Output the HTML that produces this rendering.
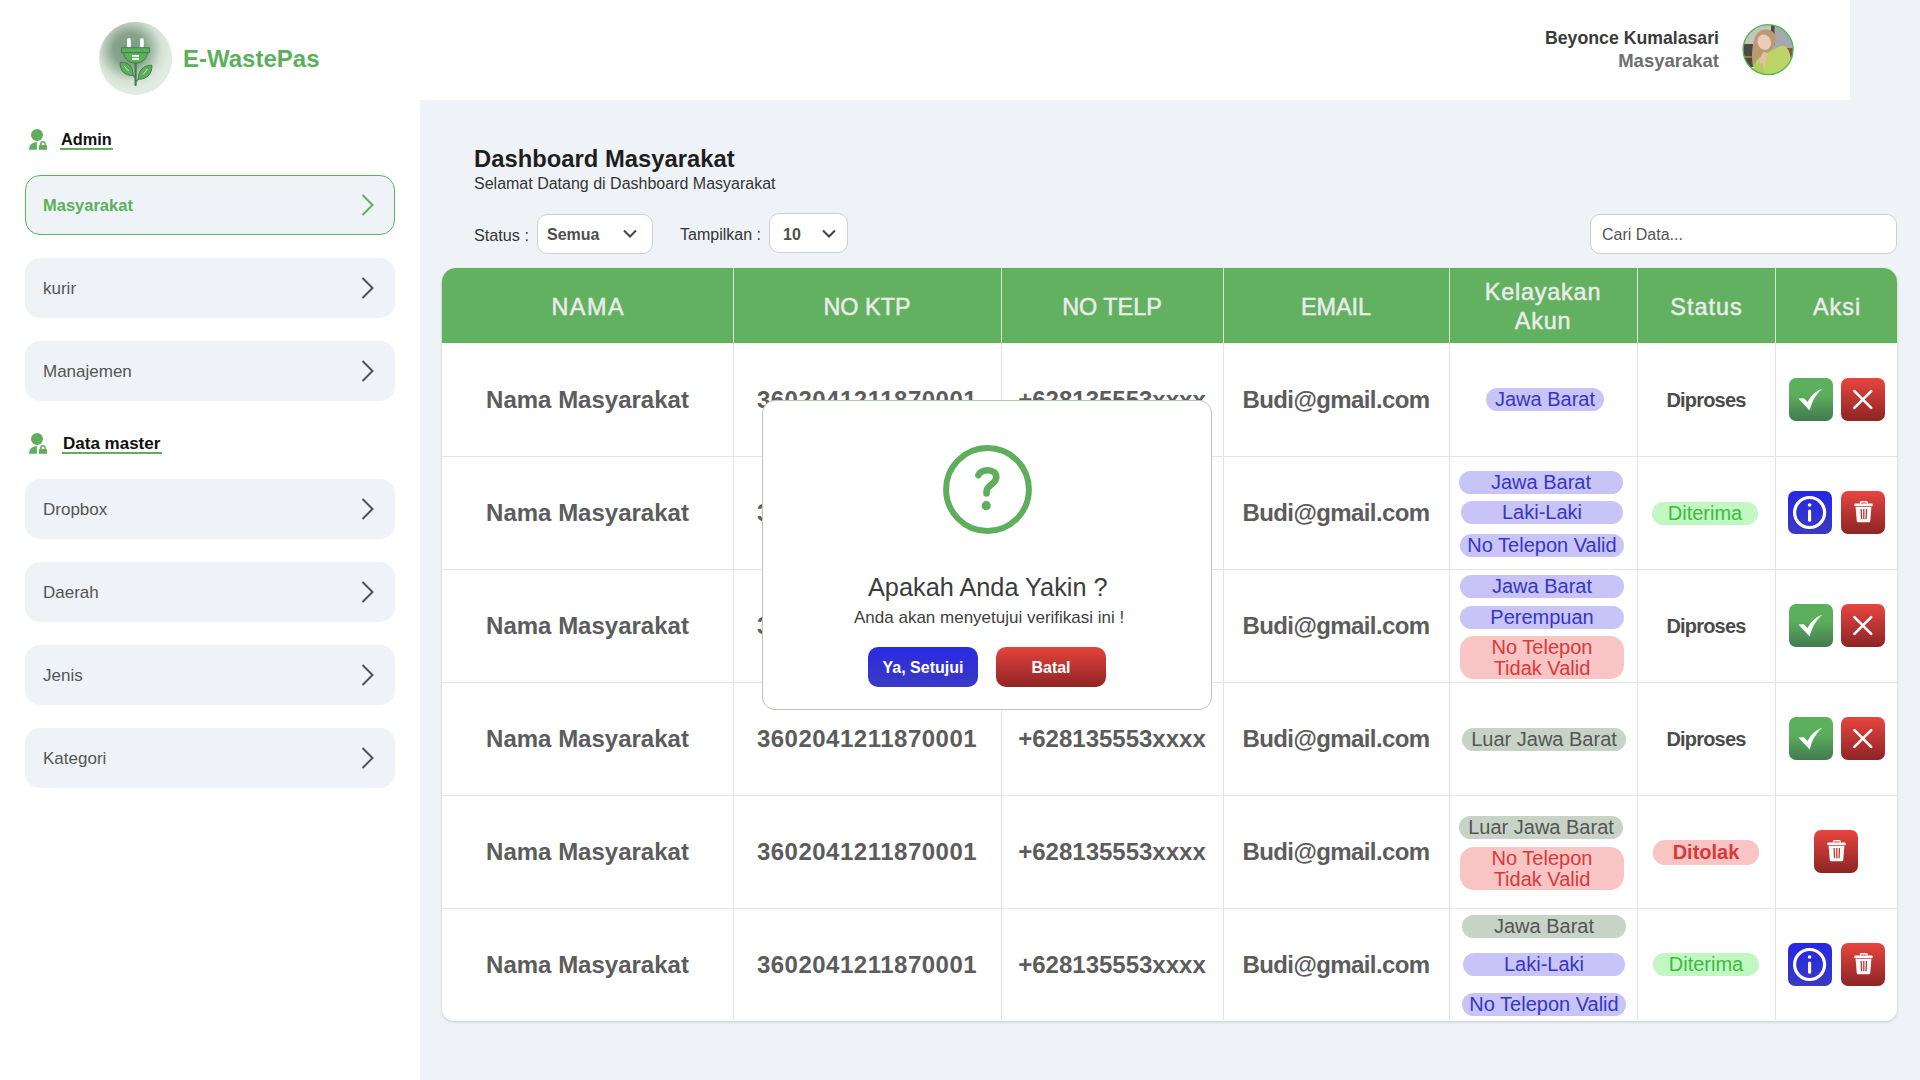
<!DOCTYPE html>
<html><head><meta charset="utf-8">
<style>
*{box-sizing:border-box;margin:0;padding:0}
html,body{width:1920px;height:1080px;overflow:hidden;background:#eff3f8;font-family:"Liberation Sans",sans-serif}
.abs{position:absolute}
.t{position:absolute;white-space:nowrap;line-height:1}
#sidebar{position:absolute;left:0;top:0;width:420px;height:1080px;background:#fff}
#topbar{position:absolute;left:0;top:0;width:1850px;height:100px;background:#fff}
.nav{position:absolute;left:25px;width:370px;height:60px;background:#eff3f8;border-radius:15px}
.nav .lbl{position:absolute;left:18px;top:22px;font-size:17px;line-height:1;color:#555}
.nav svg{position:absolute;left:335px;top:18px}
.sel{position:absolute;background:#fff;border:1px solid #cfcfcf;border-radius:10px}
.cell{position:absolute;display:flex;align-items:center;justify-content:center;text-align:center;white-space:nowrap}
.hd{font-size:23.4px;line-height:29px;color:#ebebeb;-webkit-text-stroke:0.5px #ebebeb;padding-top:3px}
.td{font-size:24px;line-height:1;font-weight:bold;color:#5c5c5c}
.bd{position:absolute;height:23px;border-radius:12px;font-size:20px;line-height:23px;text-align:center;white-space:nowrap}
.lv{background:#c8c4f8;color:#3636c4}
.pk{background:#f8c4c4;color:#d63a3a}
.gr{background:#c6d3c6;color:#555}
.lg{background:#c2f6c2;color:#3cbc3c}
.two{height:43px;line-height:20.5px;padding-top:1px;border-radius:14px}
.dt{font-weight:bold;line-height:25px}
.st{font-size:20px;line-height:1;font-weight:bold;color:#4a4c4a;letter-spacing:-0.8px}
.btn{position:absolute;width:44px;height:43px;border-radius:7px}
.btn svg{position:absolute;left:0;top:0}
.bg{background:linear-gradient(#5cb05c 0%,#5cae5c 40%,#427a50 100%)}
.br{background:linear-gradient(#e8453f,#8c2525)}
.bb{background:linear-gradient(#2626e6,#3a3ac2)}
.mb{position:absolute;height:40px;border-radius:10px;color:#fff;font-weight:bold;font-size:16px;line-height:42px;text-align:center}
.ktp{letter-spacing:0.5px}
.em{letter-spacing:-0.6px}
</style></head><body>
<div id="sidebar"></div>
<div id="topbar"></div>

<!-- logo -->
<svg class="abs" style="left:96px;top:20px" width="80" height="80" viewBox="0 0 80 80">
  <defs>
    <radialGradient id="lg" cx="0.42" cy="0.38" r="0.55">
      <stop offset="0" stop-color="#7d9a82"/>
      <stop offset="0.4" stop-color="#87a48b"/>
      <stop offset="0.78" stop-color="#d3e1d3"/>
      <stop offset="1" stop-color="#e1ece1"/>
    </radialGradient>
  </defs>
  <circle cx="39.6" cy="38.3" r="36.6" fill="url(#lg)"/>
  <rect x="31" y="18" width="3.8" height="10" rx="1.9" fill="#fff"/>
  <rect x="44" y="18" width="3.8" height="10" rx="1.9" fill="#fff"/>
  <rect x="25.4" y="27.8" width="28" height="4.8" fill="#5cb05c" stroke="#3f7f4a" stroke-width="1"/>
  <path d="M27.6 32.6 L51.4 32.6 A11.9 10.7 0 0 1 27.6 32.6 Z" fill="#5cb05c" stroke="#3f7f4a" stroke-width="1"/>
  <rect x="36" y="35" width="7" height="1.8" fill="#fff"/>
  <rect x="36" y="38" width="7" height="1.8" fill="#fff"/>
  <path d="M39.6 43.3 V65" stroke="#3f7f4a" stroke-width="2.2" stroke-linecap="round"/>
  <path d="M24.2 42.4 C33 41.5 37.5 48 37 55.4 C28.5 56 23.5 50 24.2 42.4 Z" fill="#5cb05c" stroke="#3f7f4a" stroke-width="1"/>
  <path d="M37 55.4 L39.6 58" stroke="#3f7f4a" stroke-width="1.2"/>
  <path d="M55.8 45.3 C56.5 53.5 51 59.5 42.3 59.2 C42 51 47.5 45 55.8 45.3 Z" fill="#5cb05c" stroke="#3f7f4a" stroke-width="1"/>
  <path d="M42.3 59.2 L39.6 62" stroke="#3f7f4a" stroke-width="1.2"/>
  <path d="M28.2 46.2 L32.6 51" stroke="#e8f3e8" stroke-width="0.8"/>
  <path d="M51.5 49 L47 54.5" stroke="#e8f3e8" stroke-width="0.8"/>
</svg>
<div class="t" style="left:183px;top:47px;font-size:24px;font-weight:bold;color:#5cb05c">E-WastePas</div>

<!-- admin heading -->
<svg class="abs" style="left:28px;top:128px" width="20" height="22" viewBox="0 0 20 22">
  <circle cx="9" cy="7" r="6" fill="#5eae5c"/>
  <path d="M1 21.8 C1 17 4 14.5 8.8 14 V21.8 Z" fill="#5eae5c"/>
  <rect x="11" y="17.1" width="7.9" height="4.7" fill="#5eae5c"/>
  <path d="M12.85 17.6 V15.8 A2.1 2.1 0 0 1 17.05 15.8 V17.6" stroke="#5eae5c" stroke-width="1.6" fill="none"/>
</svg>
<div class="t" style="left:61px;top:131px;font-size:16.3px;font-weight:bold;color:#111">Admin</div>
<div class="abs" style="left:60px;top:148px;width:53px;height:2px;background:#5cb05c"></div>

<div class="nav" style="top:175px;border:1px solid #5cb05c"><div class="lbl" style="left:17px;top:21px;color:#5cb05c;font-weight:bold;font-size:16.5px">Masyarakat</div>
<svg style="left:334px;top:17px" width="16" height="24" viewBox="0 0 16 24"><path d="M2.5 2 L12.5 12 L2.5 22" stroke="#5cb05c" stroke-width="2" fill="none"/></svg></div>
<div class="nav" style="top:258px"><div class="lbl">kurir</div>
<svg width="16" height="24" viewBox="0 0 16 24"><path d="M2.5 2 L12.5 12 L2.5 22" stroke="#4f4f4f" stroke-width="1.9" fill="none"/></svg></div>
<div class="nav" style="top:341px"><div class="lbl">Manajemen</div>
<svg width="16" height="24" viewBox="0 0 16 24"><path d="M2.5 2 L12.5 12 L2.5 22" stroke="#4f4f4f" stroke-width="1.9" fill="none"/></svg></div>

<svg class="abs" style="left:28px;top:432px" width="20" height="22" viewBox="0 0 20 22">
  <circle cx="9" cy="7" r="6" fill="#5eae5c"/>
  <path d="M1 21.8 C1 17 4 14.5 8.8 14 V21.8 Z" fill="#5eae5c"/>
  <rect x="11" y="17.1" width="7.9" height="4.7" fill="#5eae5c"/>
  <path d="M12.85 17.6 V15.8 A2.1 2.1 0 0 1 17.05 15.8 V17.6" stroke="#5eae5c" stroke-width="1.6" fill="none"/>
</svg>
<div class="t" style="left:63px;top:435px;font-size:17px;font-weight:bold;color:#111">Data master</div>
<div class="abs" style="left:62px;top:452px;width:100px;height:2px;background:#5cb05c"></div>

<div class="nav" style="top:479px"><div class="lbl">Dropbox</div>
<svg width="16" height="24" viewBox="0 0 16 24"><path d="M2.5 2 L12.5 12 L2.5 22" stroke="#4f4f4f" stroke-width="1.9" fill="none"/></svg></div>
<div class="nav" style="top:562px"><div class="lbl">Daerah</div>
<svg width="16" height="24" viewBox="0 0 16 24"><path d="M2.5 2 L12.5 12 L2.5 22" stroke="#4f4f4f" stroke-width="1.9" fill="none"/></svg></div>
<div class="nav" style="top:645px"><div class="lbl">Jenis</div>
<svg width="16" height="24" viewBox="0 0 16 24"><path d="M2.5 2 L12.5 12 L2.5 22" stroke="#4f4f4f" stroke-width="1.9" fill="none"/></svg></div>
<div class="nav" style="top:728px"><div class="lbl">Kategori</div>
<svg width="16" height="24" viewBox="0 0 16 24"><path d="M2.5 2 L12.5 12 L2.5 22" stroke="#4f4f4f" stroke-width="1.9" fill="none"/></svg></div>

<!-- user -->
<div class="t" style="right:201px;top:30px;font-size:17.7px;font-weight:bold;color:#3a3a3a">Beyonce Kumalasari</div>
<div class="t" style="right:201px;top:52px;font-size:18.5px;font-weight:bold;color:#6e6e6e">Masyarakat</div>

<!-- avatar -->
<svg class="abs" style="left:1741px;top:23px" width="54" height="54" viewBox="0 0 54 54">
  <defs><clipPath id="av"><circle cx="27.1" cy="26.6" r="25"/></clipPath></defs>
  <g clip-path="url(#av)">
    <rect x="0" y="0" width="54" height="54" fill="#a4a9ac"/>
    <rect x="0" y="0" width="30" height="54" fill="#c4c4c0"/>
    <rect x="30" y="0" width="3.5" height="22" fill="#4a4a48"/>
    <rect x="0" y="21" width="12" height="23" fill="#4e4844"/>
    <rect x="1" y="33" width="10" height="2" fill="#a86e50"/>
    <rect x="0" y="44" width="14" height="10" fill="#dcdedf"/>
    <rect x="44" y="25" width="10" height="16" fill="#7b5a48"/>
    <path d="M12 44 C10 34 11 20 15 12 C19 6 27 5 32 9 C35 12 35 17 33 22 L29 30 L20 46 Z" fill="#b79b73"/>
    <ellipse cx="23.2" cy="19.2" rx="6.6" ry="7.8" transform="rotate(-22 23.2 19.2)" fill="#ecccb8"/>
    <path d="M12 54 C12 44 15 36 21 33 C27 30 33 25 42 22.5 C48 24 51 32 51 54 Z" fill="#bdd466"/>
    <path d="M19.5 45 C18.5 39 19 33 22.5 29 L27 30 C25 34 24.5 39 24.5 45 Z" fill="#e4bea8"/>
    <path d="M13 41 C12 46 13 54 15 54 L24 54 C23 49 22.5 44 21.5 40 Z" fill="#b3cd5c"/>
  </g>
  <circle cx="27.1" cy="26.6" r="25" stroke="#4dba4d" stroke-width="1.3" fill="none"/>
</svg>
<!-- MAIN -->
<div class="t" style="left:474px;top:147px;font-size:23.8px;font-weight:bold;color:#1e1e1e">Dashboard Masyarakat</div>
<div class="t" style="left:474px;top:176px;font-size:16px;color:#333">Selamat Datang di Dashboard Masyarakat</div>

<div class="t" style="left:474px;top:227px;font-size:16.2px;color:#333">Status :</div>
<div class="sel" style="left:537px;top:214px;width:116px;height:40px"></div>
<div class="t" style="left:547px;top:227px;font-size:16px;font-weight:bold;color:#4e4e4e">Semua</div>
<div class="t" style="left:680px;top:227px;font-size:16px;color:#333">Tampilkan :</div>
<div class="sel" style="left:769px;top:213px;width:79px;height:40px"></div>
<div class="t" style="left:783px;top:227px;font-size:16px;font-weight:bold;color:#4e4e4e">10</div>

<div class="sel" style="left:1590px;top:214px;width:307px;height:40px"></div>
<div class="t" style="left:1602px;top:227px;font-size:16px;color:#555">Cari Data...</div>

<!-- select chevrons -->
<svg class="abs" style="left:622px;top:228px" width="16" height="12" viewBox="0 0 16 12"><path d="M2 2.5 L8 8.5 L14 2.5" stroke="#444" stroke-width="2" fill="none"/></svg>
<svg class="abs" style="left:821px;top:228px" width="16" height="12" viewBox="0 0 16 12"><path d="M2 2.5 L8 8.5 L14 2.5" stroke="#444" stroke-width="2" fill="none"/></svg>


<!-- TABLE -->
<div class="abs" style="left:442px;top:268px;width:1455px;height:753px;background:#fff;border-radius:14px 14px 12px 12px;box-shadow:0 1px 3px rgba(0,0,0,0.18)"></div>
<div class="abs" style="left:442px;top:268px;width:1455px;height:75px;background:#62b160;border-radius:14px 14px 0 0;box-shadow:0 1px 2px rgba(0,0,0,0.08)"></div>
<div class="abs" style="left:733px;top:268px;width:1px;height:75px;background:#d9e6d8"></div>
<div class="abs" style="left:733px;top:343px;width:1px;height:677px;background:#e4e4e4"></div>
<div class="abs" style="left:1001px;top:268px;width:1px;height:75px;background:#d9e6d8"></div>
<div class="abs" style="left:1001px;top:343px;width:1px;height:677px;background:#e4e4e4"></div>
<div class="abs" style="left:1223px;top:268px;width:1px;height:75px;background:#d9e6d8"></div>
<div class="abs" style="left:1223px;top:343px;width:1px;height:677px;background:#e4e4e4"></div>
<div class="abs" style="left:1449px;top:268px;width:1px;height:75px;background:#d9e6d8"></div>
<div class="abs" style="left:1449px;top:343px;width:1px;height:677px;background:#e4e4e4"></div>
<div class="abs" style="left:1637px;top:268px;width:1px;height:75px;background:#d9e6d8"></div>
<div class="abs" style="left:1637px;top:343px;width:1px;height:677px;background:#e4e4e4"></div>
<div class="abs" style="left:1775px;top:268px;width:1px;height:75px;background:#d9e6d8"></div>
<div class="abs" style="left:1775px;top:343px;width:1px;height:677px;background:#e4e4e4"></div>
<div class="abs" style="left:442px;top:456px;width:1455px;height:1px;background:#e4e4e4"></div>
<div class="abs" style="left:442px;top:569px;width:1455px;height:1px;background:#e4e4e4"></div>
<div class="abs" style="left:442px;top:682px;width:1455px;height:1px;background:#e4e4e4"></div>
<div class="abs" style="left:442px;top:795px;width:1455px;height:1px;background:#e4e4e4"></div>
<div class="abs" style="left:442px;top:908px;width:1455px;height:1px;background:#e4e4e4"></div>
<div class="cell hd" style="left:442px;top:268px;width:291px;height:75px;letter-spacing:1.5px;text-indent:1.5px">NAMA</div>
<div class="cell hd" style="left:733px;top:268px;width:268px;height:75px">NO KTP</div>
<div class="cell hd" style="left:1001px;top:268px;width:222px;height:75px">NO TELP</div>
<div class="cell hd" style="left:1223px;top:268px;width:226px;height:75px">EMAIL</div>
<div class="cell hd" style="left:1449px;top:268px;width:188px;height:75px;letter-spacing:0.8px">Kelayakan<br>Akun</div>
<div class="cell hd" style="left:1637px;top:268px;width:138px;height:75px;letter-spacing:1px;text-indent:1px">Status</div>
<div class="cell hd" style="left:1775px;top:268px;width:123px;height:75px;letter-spacing:1px;text-indent:1px">Aksi</div>
<div class="cell td nm" style="left:442px;top:343px;width:291px;height:113px">Nama Masyarakat</div>
<div class="cell td ktp" style="left:733px;top:343px;width:268px;height:113px">3602041211870001</div>
<div class="cell td tel" style="left:1001px;top:343px;width:222px;height:113px">+628135553xxxx</div>
<div class="cell td em" style="left:1223px;top:343px;width:226px;height:113px">Budi@gmail.com</div>
<div class="cell td nm" style="left:442px;top:456px;width:291px;height:113px">Nama Masyarakat</div>
<div class="cell td ktp" style="left:733px;top:456px;width:268px;height:113px">3602041211870001</div>
<div class="cell td tel" style="left:1001px;top:456px;width:222px;height:113px">+628135553xxxx</div>
<div class="cell td em" style="left:1223px;top:456px;width:226px;height:113px">Budi@gmail.com</div>
<div class="cell td nm" style="left:442px;top:569px;width:291px;height:113px">Nama Masyarakat</div>
<div class="cell td ktp" style="left:733px;top:569px;width:268px;height:113px">3602041211870001</div>
<div class="cell td tel" style="left:1001px;top:569px;width:222px;height:113px">+628135553xxxx</div>
<div class="cell td em" style="left:1223px;top:569px;width:226px;height:113px">Budi@gmail.com</div>
<div class="cell td nm" style="left:442px;top:682px;width:291px;height:113px">Nama Masyarakat</div>
<div class="cell td ktp" style="left:733px;top:682px;width:268px;height:113px">3602041211870001</div>
<div class="cell td tel" style="left:1001px;top:682px;width:222px;height:113px">+628135553xxxx</div>
<div class="cell td em" style="left:1223px;top:682px;width:226px;height:113px">Budi@gmail.com</div>
<div class="cell td nm" style="left:442px;top:795px;width:291px;height:113px">Nama Masyarakat</div>
<div class="cell td ktp" style="left:733px;top:795px;width:268px;height:113px">3602041211870001</div>
<div class="cell td tel" style="left:1001px;top:795px;width:222px;height:113px">+628135553xxxx</div>
<div class="cell td em" style="left:1223px;top:795px;width:226px;height:113px">Budi@gmail.com</div>
<div class="cell td nm" style="left:442px;top:909px;width:291px;height:112px">Nama Masyarakat</div>
<div class="cell td ktp" style="left:733px;top:909px;width:268px;height:112px">3602041211870001</div>
<div class="cell td tel" style="left:1001px;top:909px;width:222px;height:112px">+628135553xxxx</div>
<div class="cell td em" style="left:1223px;top:909px;width:226px;height:112px">Budi@gmail.com</div>

<!-- KELAYAKAN badges -->
<div class="bd lv" style="left:1486px;top:388px;width:118px">Jawa Barat</div>

<div class="bd lv" style="left:1459px;top:471px;width:164px">Jawa Barat</div>
<div class="bd lv" style="left:1461px;top:501px;width:162px">Laki-Laki</div>
<div class="bd lv" style="left:1460px;top:534px;width:164px">No Telepon Valid</div>

<div class="bd lv" style="left:1460px;top:575px;width:164px">Jawa Barat</div>
<div class="bd lv" style="left:1460px;top:606px;width:164px">Perempuan</div>
<div class="bd pk two" style="left:1460px;top:636px;width:164px">No Telepon<br>Tidak Valid</div>

<div class="bd gr" style="left:1462px;top:728px;width:164px">Luar Jawa Barat</div>

<div class="bd gr" style="left:1459px;top:816px;width:164px">Luar Jawa Barat</div>
<div class="bd pk two" style="left:1460px;top:847px;width:164px">No Telepon<br>Tidak Valid</div>

<div class="bd gr" style="left:1462px;top:915px;width:164px">Jawa Barat</div>
<div class="bd lv" style="left:1463px;top:953px;width:162px">Laki-Laki</div>
<div class="bd lv" style="left:1462px;top:993px;width:164px">No Telepon Valid</div>

<!-- STATUS -->
<div class="cell st" style="left:1637px;top:343px;width:138px;height:113px">Diproses</div>
<div class="bd lg" style="left:1652px;top:502px;width:106px">Diterima</div>
<div class="cell st" style="left:1637px;top:569px;width:138px;height:113px">Diproses</div>
<div class="cell st" style="left:1637px;top:682px;width:138px;height:113px">Diproses</div>
<div class="bd pk dt" style="left:1653px;top:840px;width:106px;height:25px">Ditolak</div>
<div class="bd lg" style="left:1653px;top:953px;width:106px">Diterima</div>

<!-- AKSI -->
<div class="btn bg" style="left:1789px;top:378px"><svg width="44" height="43" viewBox="0 0 44 43"><path d="M9.4 20.4 L14.9 20.3 L18.6 24.1 C22 17.5 26 13.5 33.3 10.8 C27.5 16 23.5 22 20.7 32.4 Z" fill="#fff"/></svg></div>
<div class="btn br" style="left:1841px;top:378px"><svg width="44" height="43" viewBox="0 0 44 43"><path d="M13.4 13.2 L30.2 29.8 M30.2 13.2 L13.4 29.8" stroke="#fff" stroke-width="2.6" stroke-linecap="round"/></svg></div>
<div class="btn bb" style="left:1788px;top:491px"><svg width="44" height="43" viewBox="0 0 44 43"><circle cx="21.6" cy="21.5" r="15" stroke="#fff" stroke-width="3.2" fill="none"/><circle cx="21.6" cy="14" r="1.8" fill="#fff"/><path d="M21.6 20 V29.3" stroke="#fff" stroke-width="3.1" stroke-linecap="round"/></svg></div>
<div class="btn br" style="left:1841px;top:491px"><svg width="44" height="43" viewBox="0 0 44 43"><path d="M19.5 12.8 V11.6 Q19.5 10.7 20.4 10.7 H25.3 Q26.2 10.7 26.2 11.6 V12.8" stroke="#fff" stroke-width="1.4" fill="none"/><rect x="13.2" y="12.6" width="18.6" height="2.6" rx="1.2" fill="#fff"/><path d="M14.6 15.9 H30.4 L29.2 30.3 Q29.1 31.3 28.1 31.3 H16.9 Q15.9 31.3 15.8 30.3 Z" fill="#fff"/><path d="M20.1 18 L20.6 28.3 M22.8 18 V28.3 M25.5 18 L25 28.3" stroke="#c03430" stroke-width="1.3"/></svg></div>
<div class="btn bg" style="left:1789px;top:604px"><svg width="44" height="43" viewBox="0 0 44 43"><path d="M9.4 20.4 L14.9 20.3 L18.6 24.1 C22 17.5 26 13.5 33.3 10.8 C27.5 16 23.5 22 20.7 32.4 Z" fill="#fff"/></svg></div>
<div class="btn br" style="left:1841px;top:604px"><svg width="44" height="43" viewBox="0 0 44 43"><path d="M13.4 13.2 L30.2 29.8 M30.2 13.2 L13.4 29.8" stroke="#fff" stroke-width="2.6" stroke-linecap="round"/></svg></div>
<div class="btn bg" style="left:1789px;top:717px"><svg width="44" height="43" viewBox="0 0 44 43"><path d="M9.4 20.4 L14.9 20.3 L18.6 24.1 C22 17.5 26 13.5 33.3 10.8 C27.5 16 23.5 22 20.7 32.4 Z" fill="#fff"/></svg></div>
<div class="btn br" style="left:1841px;top:717px"><svg width="44" height="43" viewBox="0 0 44 43"><path d="M13.4 13.2 L30.2 29.8 M30.2 13.2 L13.4 29.8" stroke="#fff" stroke-width="2.6" stroke-linecap="round"/></svg></div>
<div class="btn br" style="left:1814px;top:830px"><svg width="44" height="43" viewBox="0 0 44 43"><path d="M19.5 12.8 V11.6 Q19.5 10.7 20.4 10.7 H25.3 Q26.2 10.7 26.2 11.6 V12.8" stroke="#fff" stroke-width="1.4" fill="none"/><rect x="13.2" y="12.6" width="18.6" height="2.6" rx="1.2" fill="#fff"/><path d="M14.6 15.9 H30.4 L29.2 30.3 Q29.1 31.3 28.1 31.3 H16.9 Q15.9 31.3 15.8 30.3 Z" fill="#fff"/><path d="M20.1 18 L20.6 28.3 M22.8 18 V28.3 M25.5 18 L25 28.3" stroke="#c03430" stroke-width="1.3"/></svg></div>
<div class="btn bb" style="left:1788px;top:943px"><svg width="44" height="43" viewBox="0 0 44 43"><circle cx="21.6" cy="21.5" r="15" stroke="#fff" stroke-width="3.2" fill="none"/><circle cx="21.6" cy="14" r="1.8" fill="#fff"/><path d="M21.6 20 V29.3" stroke="#fff" stroke-width="3.1" stroke-linecap="round"/></svg></div>
<div class="btn br" style="left:1841px;top:943px"><svg width="44" height="43" viewBox="0 0 44 43"><path d="M19.5 12.8 V11.6 Q19.5 10.7 20.4 10.7 H25.3 Q26.2 10.7 26.2 11.6 V12.8" stroke="#fff" stroke-width="1.4" fill="none"/><rect x="13.2" y="12.6" width="18.6" height="2.6" rx="1.2" fill="#fff"/><path d="M14.6 15.9 H30.4 L29.2 30.3 Q29.1 31.3 28.1 31.3 H16.9 Q15.9 31.3 15.8 30.3 Z" fill="#fff"/><path d="M20.1 18 L20.6 28.3 M22.8 18 V28.3 M25.5 18 L25 28.3" stroke="#c03430" stroke-width="1.3"/></svg></div>

<!-- MODAL -->
<div class="abs" style="left:762px;top:400px;width:450px;height:310px;background:#fff;border:1px solid #b9c6b9;border-radius:13px"></div>
<svg class="abs" style="left:942px;top:444px" width="91" height="91" viewBox="0 0 91 91">
  <circle cx="45.5" cy="45.5" r="41.4" stroke="#5eae5c" stroke-width="6" fill="none"/>
  <path d="M36.4 31.2 C38 27.8 41.5 26.2 45.5 26.2 C50.8 26.2 54.3 29 54.3 33 C54.3 37 51.2 39.2 48.6 41.2 C45.6 43.5 44.5 45.2 44.5 48 V49.4" stroke="#5eae5c" stroke-width="6.6" fill="none" stroke-linecap="round" stroke-linejoin="round"/>
  <circle cx="44.2" cy="61.7" r="4.6" fill="#5eae5c"/>
</svg>
<div class="t" style="left:868px;top:575px;font-size:25.3px;color:#3c3c3c">Apakah Anda Yakin ?</div>
<div class="t" style="left:854px;top:609px;font-size:17px;color:#3e3e3e">Anda akan menyetujui verifikasi ini !</div>
<div class="mb" style="left:868px;top:647px;width:110px;background:linear-gradient(#2a2ae2,#3a3ac4)">Ya, Setujui</div>
<div class="mb" style="left:996px;top:647px;width:110px;background:linear-gradient(#e5423d,#8e2525)">Batal</div>

</body></html>
